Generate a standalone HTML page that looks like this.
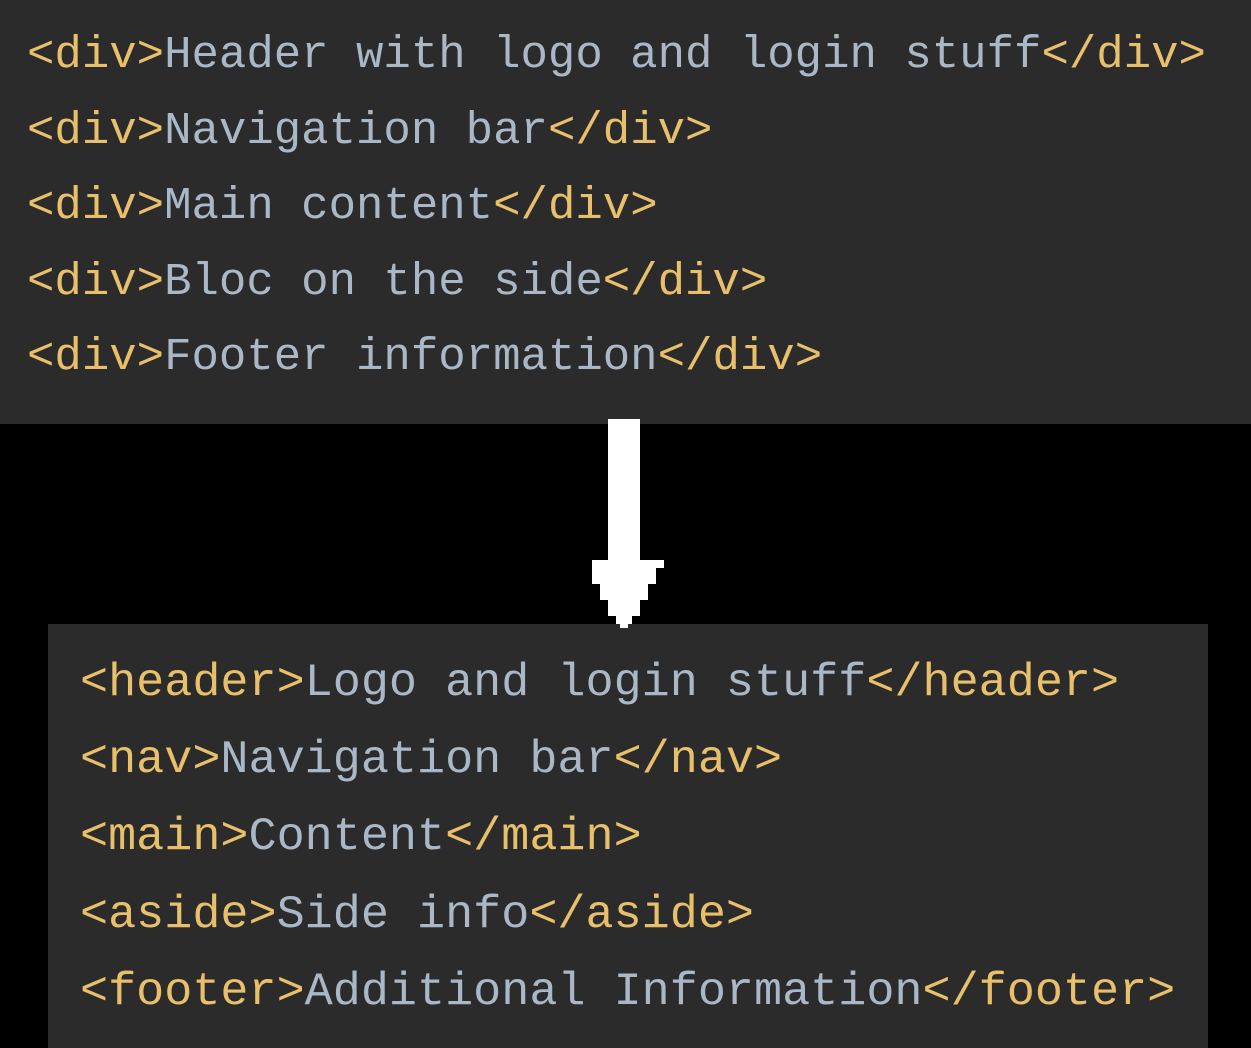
<!DOCTYPE html>
<html><head><meta charset="utf-8"><style>
html,body{margin:0;padding:0;background:#000;width:1251px;height:1048px;overflow:hidden;position:relative}
.p{position:absolute;background:#2b2b2b;font-family:"Liberation Mono",monospace;white-space:pre}
.t{color:#e8bf6a}.x{color:#a9b7c6}
#a{left:0;top:0;width:1251px;height:424px;font-size:45.7px;line-height:75.5px}
#a .in{position:absolute;left:27px;top:18px}
#b{left:48px;top:624px;width:1160px;height:424px;font-size:46.8px;line-height:77.2px}
#b .in{position:absolute;left:32px;top:21px}
.r{position:absolute;background:#fff}
</style></head><body>
<div class="p" id="a"><div class="in"><span class="t">&lt;div&gt;</span><span class="x">Header with logo and login stuff</span><span class="t">&lt;/div&gt;</span>
<span class="t">&lt;div&gt;</span><span class="x">Navigation bar</span><span class="t">&lt;/div&gt;</span>
<span class="t">&lt;div&gt;</span><span class="x">Main content</span><span class="t">&lt;/div&gt;</span>
<span class="t">&lt;div&gt;</span><span class="x">Bloc on the side</span><span class="t">&lt;/div&gt;</span>
<span class="t">&lt;div&gt;</span><span class="x">Footer information</span><span class="t">&lt;/div&gt;</span></div></div>
<div class="r" style="left:608px;top:419px;width:32px;height:145px"></div>
<div class="r" style="left:592px;top:560px;width:72px;height:8px"></div>
<div class="r" style="left:592px;top:568px;width:64px;height:16px"></div>
<div class="r" style="left:600px;top:584px;width:48px;height:16px"></div>
<div class="r" style="left:608px;top:600px;width:32px;height:16px"></div>
<div class="r" style="left:616px;top:616px;width:16px;height:8px"></div>
<div class="p" id="b"><div class="in"><span class="t">&lt;header&gt;</span><span class="x">Logo and login stuff</span><span class="t">&lt;/header&gt;</span>
<span class="t">&lt;nav&gt;</span><span class="x">Navigation bar</span><span class="t">&lt;/nav&gt;</span>
<span class="t">&lt;main&gt;</span><span class="x">Content</span><span class="t">&lt;/main&gt;</span>
<span class="t">&lt;aside&gt;</span><span class="x">Side info</span><span class="t">&lt;/aside&gt;</span>
<span class="t">&lt;footer&gt;</span><span class="x">Additional Information</span><span class="t">&lt;/footer&gt;</span></div></div>
<div class="r" style="left:620px;top:624px;width:8px;height:4px"></div>
</body></html>
